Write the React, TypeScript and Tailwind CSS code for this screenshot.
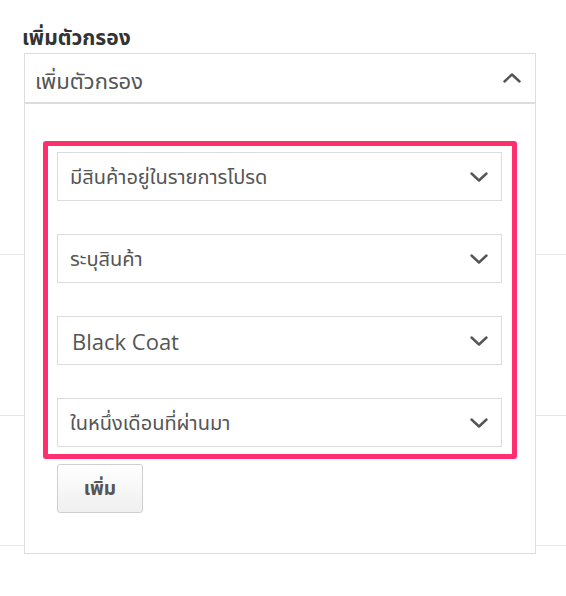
import React from "react";

const Chevron = ({ up = false }: { up?: boolean }) => (
  <svg width="18" height="10" viewBox="0 0 18 10" fill="none" className="shrink-0">
    <polyline
      points={up ? "1.5,8.5 9,1.5 16.5,8.5" : "1.5,1.5 9,8.5 16.5,1.5"}
      stroke="#555"
      strokeWidth="2.4"
      strokeLinecap="round"
      strokeLinejoin="round"
    />
  </svg>
);

const Select = ({ label, latin = false }: { label: string; latin?: boolean }) => (
  <div className="h-[49px] border border-[#dcdcdc] bg-white flex items-center justify-between pl-[12px] pr-[13px] text-[#555]">
    <span className={latin ? "leading-none text-[22px] ml-[2px]" : "leading-none text-[20px]"}>{label}</span>
    <Chevron />
  </div>
);

export default function App() {
  return (
    <div
      className="relative w-[566px] h-[596px] bg-white overflow-hidden"
      style={{ fontFamily: '"Open Sans", "Noto Sans", "Noto Sans Thai", sans-serif' }}
    >
      <div className="absolute inset-0 flex flex-col">
        <div className="h-[255px] border-b border-[#e8e8e8]" />
        <div className="h-[161px] border-b border-[#e8e8e8]" />
        <div className="h-[130px] border-b border-[#e8e8e8]" />
      </div>
      <div className="relative pl-[24px] pt-[24px]">
        <h2 className="text-[21px] font-bold leading-[27px] text-[#333] -ml-[2px]">เพิ่มตัวกรอง</h2>
        <div className="mt-[2px] w-[512px] border border-[#dcdcdc] bg-white">
          <div className="h-[50px] flex items-center justify-between pl-[10px] pr-[14px] text-[22px] text-[#555] border-b-2 border-[#dcdcdc]">
            <span className="leading-none mt-[3px]">เพิ่มตัวกรอง</span>
            <Chevron up />
          </div>
          <div className="pt-[37px] pl-[18px] pr-[18px] pb-[40px]">
            <div className="border-[5px] border-[#ff2e6e] rounded-[3px] pl-[9px] pr-[10px] pt-[6px] pb-[7px] flex flex-col gap-[33px]">
              <Select label="มีสินค้าอยู่ในรายการโปรด" />
              <Select label="ระบุสินค้า" />
              <Select label="Black Coat" latin />
              <Select label="ในหนึ่งเดือนที่ผ่านมา" />
            </div>
            <button className="ml-[14px] mt-[5px] w-[86px] h-[49px] rounded-[3px] border border-[#cfcfcf] bg-gradient-to-b from-white to-[#efefef] text-[19px] font-bold text-[#555] flex items-center justify-center">
              เพิ่ม
            </button>
          </div>
        </div>
      </div>
    </div>
  );
}
